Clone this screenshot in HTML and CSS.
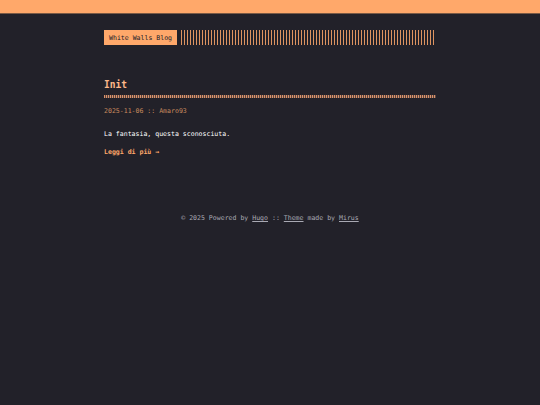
FILE: index.html
```html
<!DOCTYPE html>
<html lang="it">
<head>
<meta charset="utf-8">
<title>White Walls Blog</title>
<link rel="stylesheet" href="styles.css">
</head>
<body>
<div class="topbar"></div>
<div class="container">
  <header class="header">
    <a class="logo" href="#">White Walls Blog</a>
    <span class="stripes"></span>
  </header>
  <main class="posts">
    <article class="post">
      <h1 class="post-title"><a href="#">Init</a></h1>
      <div class="post-meta">2025-11-06 :: Amaro93</div>
      <div class="post-content">La fantasia, questa sconosciuta.</div>
      <a class="read-more" href="#">Leggi di più →</a>
    </article>
  </main>
  <footer class="footer">
    © 2025 Powered by <a href="#">Hugo</a> :: <a href="#">Theme</a> made by <a href="#">Mirus</a>
  </footer>
</div>
</body>
</html>
```
FILE: styles.css
```css
html, body {
  margin: 0;
  padding: 0;
  background: #222129;
  height: 100%;
}
body {
  font-family: "DejaVu Sans Mono", monospace;
  font-size: 6.55px;
  color: #ffffff;
}
.topbar {
  height: 13px;
  background: #ffa86a;
  border-bottom: 1px solid #7a5a45;
}
.container {
  width: 332px;
  margin: 0 auto;
}
.header {
  display: flex;
  align-items: stretch;
  gap: 4px;
  margin-top: 16px;
  height: 15px;
}
.logo {
  display: flex;
  align-items: center;
  padding: 0 5px;
  background: #ffa86a;
  color: #222129;
  text-decoration: none;
}
.stripes {
  flex: 1;
  background: repeating-linear-gradient(90deg, #ffa86a 0, #ffa86a 1px, transparent 1px, transparent 3px);
  opacity: 0.85;
}
.posts {
  margin-top: 34px;
}
.post-title {
  margin: 0;
  font-size: 9.6px;
  font-weight: bold;
  line-height: 12px;
  padding-bottom: 4px;
}
.post-title::after {
  content: "";
  display: block;
  height: 3px;
  margin-top: 0;
  background: repeating-linear-gradient(90deg, #d9926a 0, #d9926a 1px, #5a4540 1px, #5a4540 2px);
  position: relative;
  top: 4px;
}
.post-title a {
  color: #ffb88a;
  text-decoration: none;
}
.post-meta {
  margin-top: 8px;
  color: #c98a5e;
  line-height: 10px;
}
.post-content {
  margin-top: 13px;
  line-height: 10px;
}
.read-more {
  display: inline-block;
  margin-top: 8px;
  color: #ffa86a;
  font-weight: bold;
  text-decoration: none;
  line-height: 10px;
}
.footer {
  margin-top: 56px;
  text-align: center;
  color: #a9a9b3;
  line-height: 10px;
}
.footer a {
  color: #a9a9b3;
  text-decoration: underline;
}
```
